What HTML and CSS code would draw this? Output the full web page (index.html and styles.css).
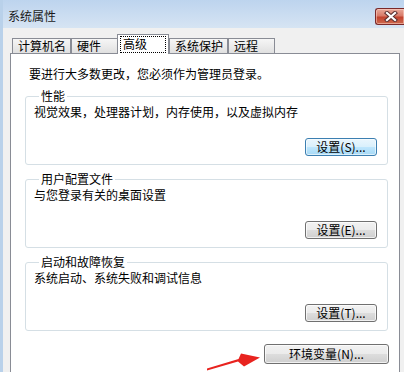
FILE: index.html
```html
<!DOCTYPE html>
<html lang="zh-CN">
<head>
<meta charset="utf-8">
<title>系统属性</title>
<link rel="stylesheet" href="styles.css">
</head>
<body>
<div class="window">
  <div class="titlebar">
    <span class="title">系统属性</span>
    <div class="close">
      <svg width="14" height="11" viewBox="0 0 14 11">
        <path d="M3 2 L11 9 M11 2 L3 9" stroke="#5a3030" stroke-width="4.2" stroke-linecap="square" fill="none"/>
        <path d="M3 2 L11 9 M11 2 L3 9" stroke="#ffffff" stroke-width="2.2" stroke-linecap="square" fill="none"/>
      </svg>
    </div>
  </div>
  <div class="body">
    <div class="tabs">
      <div class="tab">计算机名</div>
      <div class="tab">硬件</div>
      <div class="tab tab-active"><span class="focus">高级</span></div>
      <div class="tab">系统保护</div>
      <div class="tab">远程</div>
    </div>
    <div class="panel">
      <p class="note">要进行大多数更改，您必须作为管理员登录。</p>
      <fieldset class="group">
        <legend>性能</legend>
        <p class="desc">视觉效果，处理器计划，内存使用，以及虚拟内存</p>
        <div class="actions"><button class="btn btn-default">设置(S)...</button></div>
      </fieldset>
      <fieldset class="group">
        <legend>用户配置文件</legend>
        <p class="desc">与您登录有关的桌面设置</p>
        <div class="actions"><button class="btn">设置(E)...</button></div>
      </fieldset>
      <fieldset class="group">
        <legend>启动和故障恢复</legend>
        <p class="desc">系统启动、系统失败和调试信息</p>
        <div class="actions"><button class="btn">设置(T)...</button></div>
      </fieldset>
      <div class="env-row"><button class="btn btn-env">环境变量(N)...</button></div>
    </div>
  </div>
  <svg class="arrow" width="60" height="22" viewBox="206 352 60 22">
    <polygon points="207,370.5 238,361.5 244,366.5 260,357.5 241,353.5 238.5,359 207,368.5" fill="#e8231f"/>
  </svg>
</div>
</body>
</html>
```

FILE: styles.css
```css
* { box-sizing: border-box; }
html, body {
  margin: 0;
  padding: 0;
}
body {
  width: 404px;
  height: 372px;
  overflow: hidden;
  font-family: "Noto Sans CJK SC", "Noto Sans", sans-serif;
  font-size: 12px;
  color: #000;
}
.window {
  position: relative;
  width: 404px;
  height: 372px;
  overflow: hidden;
  border-left: 3px solid #b9d1ea;
  background: #f0f0f0;
}
.titlebar {
  height: 28px;
  display: flex;
  align-items: flex-start;
  background: linear-gradient(#bdd4ee, #d6e4f3);
  margin-left: -3px;
  padding-left: 3px;
}
.title {
  margin: 9px 0 0 5px;
  line-height: 14px;
  color: #1a1a1a;
}
.close {
  margin: 8px 0 0 auto;
  width: 29px;
  height: 17px;
  border: 1px solid #7b2a2a;
  border-right: 0;
  border-radius: 3px 0 0 3px;
  background: linear-gradient(#e9a99a 0%, #d77a68 45%, #c2432f 55%, #cd6a4f 100%);
  box-shadow: inset 0 0 0 1px rgba(255, 220, 210, 0.5);
  display: flex;
  align-items: center;
  justify-content: center;
  padding-left: 1px;
}
.close svg { display: block; }
.body {
  padding: 6px 0 0 7px;
}
.tabs {
  display: flex;
  align-items: flex-start;
  height: 20px;
  padding-left: 2px;
  position: relative;
  z-index: 1;
}
.tab {
  margin-top: 4px;
  height: 15px;
  min-width: 47px;
  padding: 0 4px 0 5px;
  border: 1px solid #898c95;
  border-bottom: 0;
  background: linear-gradient(#f6f6f6, #e0e0e0);
  line-height: 13px;
  white-space: nowrap;
  color: #000;
}
.tab-active {
  margin: 0 0 0 -1px;
  height: 20px;
  padding: 1px 2px 0 2px;
  background: #fff;
}
.focus {
  display: block;
  height: 17px;
  padding: 1px 19px 0 3px;
  line-height: 14px;
  outline: 1px dotted #000;
  outline-offset: -1px;
}
.panel {
  margin-top: -1px;
  width: 390px;
  height: 330px;
  border: 1px solid #898c95;
  background: #fff;
  padding: 12px 11px 0 14px;
}
.note {
  margin: 0 0 0 4px;
  line-height: 16px;
}
.group {
  margin: 7px 0 0 0;
  padding: 1px 10px 8px 8px;
  border: 1px solid #d5dfe5;
  border-radius: 3px;
  min-width: 0;
}
.group legend {
  padding: 0 2px;
  margin-left: 5px;
  line-height: 14px;
  color: #000;
}
.desc {
  margin: 0;
  line-height: 16px;
}
.actions {
  display: flex;
  justify-content: flex-end;
  margin-top: 18px;
}
.btn {
  font-family: "Noto Sans CJK SC", "Noto Sans", sans-serif;
  font-size: 12px;
  line-height: 14px;
  color: #000;
  width: 72px;
  height: 18px;
  padding: 0;
  border: 1px solid #707070;
  border-radius: 3px;
  background: linear-gradient(#f2f2f2 0%, #ebebeb 50%, #dddddd 51%, #cfcfcf 100%);
  box-shadow: inset 0 0 0 1px rgba(255, 255, 255, 0.7);
}
.btn-default {
  border-color: #3c7fb1;
  background: linear-gradient(#eaf6fd 0%, #d9f0fc 50%, #bee6fd 51%, #a7d9f5 100%);
  box-shadow: inset 0 0 0 1px rgba(255, 255, 255, 0.6);
}
.env-row {
  display: flex;
  justify-content: flex-end;
  margin: 13px -1px 0 0;
}
.btn-env {
  width: 125px;
  height: 20px;
}
.arrow {
  position: absolute;
  left: 203px;
  top: 352px;
}
```
